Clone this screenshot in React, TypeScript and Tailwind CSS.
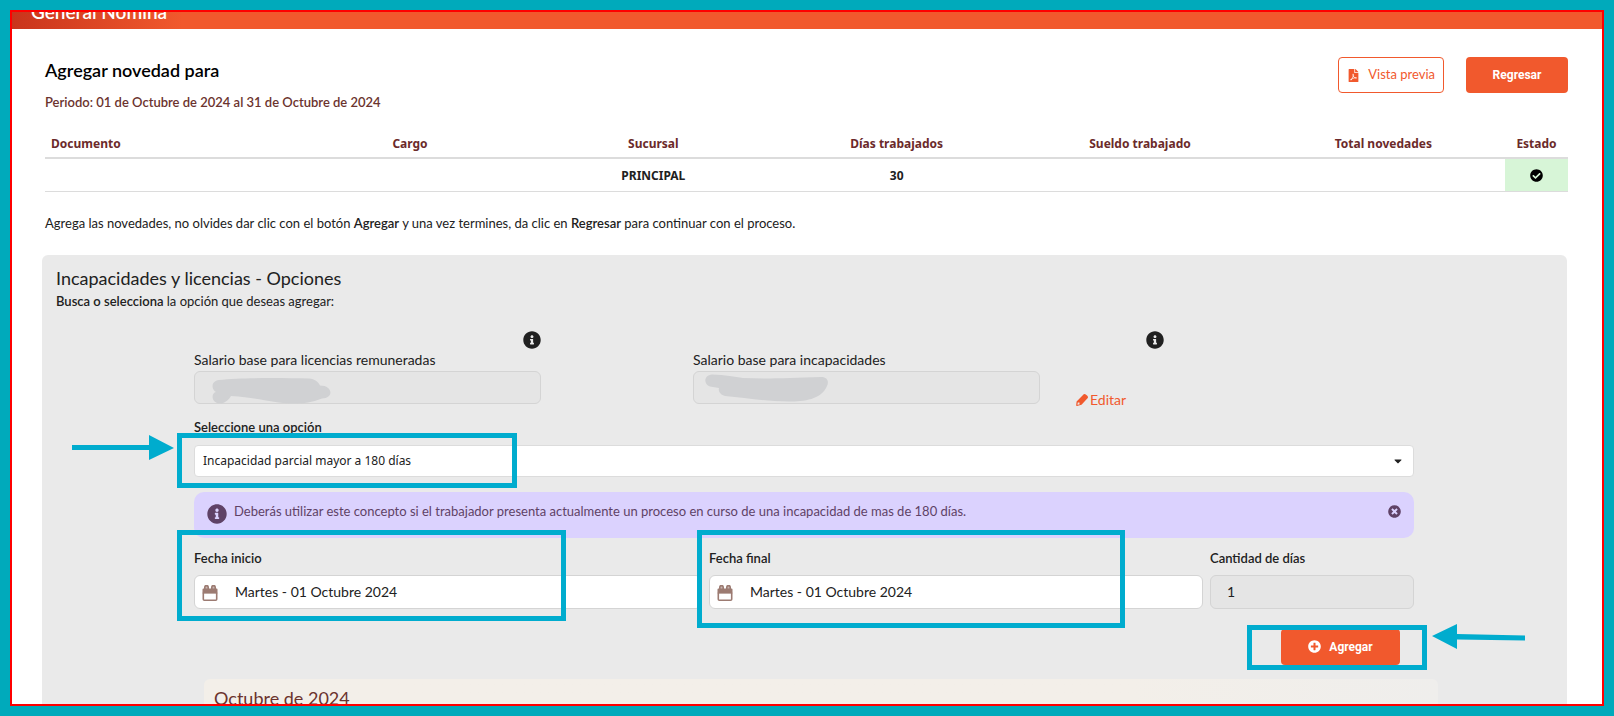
import { FaCaretDown, FaCheckCircle, FaFilePdf, FaInfoCircle, FaPlusCircle, FaTimesCircle } from 'react-icons/fa';
import { clsx } from 'clsx';

const columns = ['Documento', 'Cargo', 'Sucursal', 'Días trabajados', 'Sueldo trabajado', 'Total novedades'];
const row = ['', '', 'PRINCIPAL', '30', '', ''];

function PencilIcon() {
  return (
    <svg viewBox="0 0 12 12" className="size-3" fill="currentColor" aria-hidden="true">
      <path
        fillRule="evenodd"
        d="M7 1a2 2 0 0 1 2.800-.5l1.500 1.300a2 2 0 0 1 0 2.800L5.500 10.800 1 11.900a.7.7 0 0 1-.8-.8L.6 7.500ZM1.800 8.600l-.4 2.100 2.100-.3v-1.800Z"
      />
    </svg>
  );
}

function CalendarIcon() {
  return (
    <svg viewBox="0 0 16 16" className="size-4" aria-hidden="true">
      <path d="M2.800 4.500V2.300a1.500 1.500 0 0 1 3.400 0v2.200M9.800 4.500V2.300a1.500 1.500 0 0 1 3.400 0v2.200" fill="#c9b6b0" stroke="#9c7b72" strokeWidth="1.600" />
      <path d="M1.500 3.500h13a1 1 0 0 1 1 1v4H.5v-4a1 1 0 0 1 1-1Z" fill="#9c7b72" />
      <rect x="1.300" y="7.500" width="13.400" height="7.700" rx="1" fill="none" stroke="#9c7b72" strokeWidth="1.600" />
    </svg>
  );
}

function DateField({ id, label }: { id: string; label: string }) {
  return (
    <div>
      <label htmlFor={id} className="block text-[13px] leading-5 font-semibold">{label}</label>
      <div className="relative mt-[7px]">
        <span className="absolute left-[8px] top-[10px]"><CalendarIcon /></span>
        <input
          id={id}
          defaultValue="Martes - 01 Octubre 2024"
          className="h-[34px] w-full rounded-[6px] border border-[#d4d4d4] bg-white pl-10 pr-3 text-[14px]"
        />
      </div>
    </div>
  );
}

function Highlight({ className }: { className: string }) {
  return <div className={clsx('pointer-events-none absolute border-[5px] border-[#00acce]', className)} />;
}

export default function App() {
  return (
    <div className="flex h-screen flex-col bg-[#00aabb] p-[10px] font-['Lato',sans-serif] text-[#212121]">
      <div className="flex min-h-0 flex-1 flex-col overflow-hidden border-2 border-[#ff0000] bg-white">
        <header className="flex h-[17px] shrink-0 items-end overflow-hidden bg-linear-to-r from-[#c9341c] to-[#f1592d] to-[170px] px-[19px] pb-[5px]">
          <span className="text-[19px] leading-6 font-semibold text-white">General Nomina</span>
        </header>

        <main className="pl-[33px] pr-[34px]">
          <div className="flex justify-between pt-[28px]">
            <div>
              <h1 className="text-[18px] leading-[26px] font-semibold text-black">Agregar novedad para</h1>
              <p className="mt-[9px] text-[13px] leading-5 font-semibold text-[#6b332e]">
                Periodo: 01 de Octubre de 2024 al 31 de Octubre de 2024
              </p>
            </div>
            <div className="flex items-start gap-[22px]">
              <button className="flex h-9 items-center gap-2 rounded-[4px] border border-[#f1592d] px-2 text-[13px] text-[#f1592d]">
                <FaFilePdf className="size-[13px]" />
                Vista previa
              </button>
              <button className="h-9 w-[102px] rounded-[4px] bg-[#f1592d] font-['Roboto',sans-serif] text-[12px] font-bold text-white">
                Regresar
              </button>
            </div>
          </div>

          <table className="mt-[17px] w-full table-fixed font-['Noto_Sans',sans-serif] text-[12px] font-bold">
            <thead>
              <tr className="h-[29px] border-b-2 border-[#dcdcdc] text-[#6b2a2a]">
                {columns.map((name, i) => (
                  <th key={name} className={clsx('pt-[2px]', i === 0 ? 'pl-[6px] text-left' : 'text-center')}>{name}</th>
                ))}
                <th className="w-[63px] pt-[2px]">Estado</th>
              </tr>
            </thead>
            <tbody>
              <tr className="h-[33px] border-b border-[#dcdcdc]">
                {row.map((value, i) => (
                  <td key={i} className="pt-[2px] text-center">{value}</td>
                ))}
                <td className="bg-[#d7f5d7] pt-[2px]">
                  <FaCheckCircle className="mx-auto size-[13px] text-black" />
                </td>
              </tr>
            </tbody>
          </table>

          <p className="mt-[21px] text-[13px] leading-5">
            Agrega las novedades, no olvides dar clic con el botón <b className="font-semibold">Agregar</b> y una vez
            termines, da clic en <b className="font-semibold">Regresar</b> para continuar con el proceso.
          </p>
        </main>

        <section className="relative mt-[22px] ml-[30px] mr-[35px] min-h-[460px] shrink-0 rounded-[6px] bg-[#eaeaea] pt-[11px]">
          <div className="px-[14px]">
            <h2 className="text-[18px] leading-6">Incapacidades y licencias - Opciones</h2>
            <p className="mt-px text-[13px] leading-5">
              <b className="font-semibold">Busca o selecciona</b> la opción que deseas agregar:
            </p>
          </div>

          <form className="ml-[152px] mr-[153px] mt-5" onSubmit={(e) => e.preventDefault()}>
            <div className="grid grid-cols-[347fr_152fr_471fr_250fr]">
              <div>
                <FaInfoCircle className="ml-auto size-[18px]" />
                <label htmlFor="licencias" className="mt-px block text-[14px] leading-5">
                  Salario base para licencias remuneradas
                </label>
                <div className="relative mt-px">
                  <input id="licencias" disabled className="h-[33px] w-full rounded-[6px] border border-[#d4d4d4] bg-[#e5e5e5]" />
                  <svg viewBox="0 0 119 26" className="absolute left-[18px] top-[7px] h-[26px] w-[119px]" aria-hidden="true">
                    <path d="M7 2C30-.5 70 0 97 .5c6 .5 9 3 11 7 13 0 14 13 2 13-10 4-18 5-28 5C60 25 50 20 19 18c-3 5-8 8-12 7.500C-1 24-1 15 4 14-1 11-1 3 7 2Z" fill="#d0d1d3" />
                  </svg>
                </div>
              </div>
              <div className="col-start-3">
                <FaInfoCircle className="ml-auto size-[18px]" />
                <label htmlFor="incapacidades" className="mt-px block text-[14px] leading-5">
                  Salario base para incapacidades
                </label>
                <div className="mt-px flex h-[39px] gap-9">
                  <div className="relative w-[347px]">
                    <input id="incapacidades" disabled className="h-[33px] w-full rounded-[6px] border border-[#d4d4d4] bg-[#e5e5e5]" />
                    <svg viewBox="0 0 123 28" className="absolute left-[12px] top-[3px] h-[28px] w-[123px]" aria-hidden="true">
                      <path d="M7 .5C20 1 30 3 38 4c25 1 45 0 78-1 7 0 8 5 6 9-5 12-20 16-39 15.500C60 27 40 24 20 22c-4-1-7-4-6-8L5 12.500C-2 10-1 1 7 .5Z" fill="#d0d1d3" />
                    </svg>
                  </div>
                  <button className="flex items-center gap-[2px] self-end text-[14px] leading-5 text-[#f1592d]">
                    <PencilIcon />
                    Editar
                  </button>
                </div>
              </div>
            </div>

            <label htmlFor="opcion" className="mt-[7px] block text-[13px] leading-5 font-semibold">Seleccione una opción</label>
            <div className="relative mt-[8px]">
              <select id="opcion" className="h-8 w-full appearance-none rounded-[4px] border border-[#dcdcdc] bg-white px-2 font-['Noto_Sans',sans-serif] text-[12px]">
                <option>Incapacidad parcial mayor a 180 días</option>
              </select>
              <FaCaretDown className="pointer-events-none absolute right-[10px] top-[10px] size-3" />
            </div>

            <div role="status" className="mt-[15px] flex h-[46px] items-start rounded-[10px] bg-[#dbd2fe] px-[13px] pt-[9px] text-[13px] text-[#5f4266]">
              <FaInfoCircle className="mt-[3px] size-5" />
              <span className="ml-[7px] leading-5">
                Deberás utilizar este concepto si el trabajador presenta actualmente un proceso en curso de una incapacidad de mas de 180 días.
              </span>
              <button aria-label="Cerrar" className="ml-auto mt-[4px]">
                <FaTimesCircle className="size-[13px]" />
              </button>
            </div>

            <div className="mt-[10px] grid grid-cols-[508fr_494fr_204fr] gap-[7px]">
              <DateField id="inicio" label="Fecha inicio" />
              <DateField id="final" label="Fecha final" />
              <div>
                <label htmlFor="dias" className="block text-[13px] leading-5 font-semibold">Cantidad de días</label>
                <input
                  id="dias"
                  disabled
                  defaultValue="1"
                  className="mt-[7px] h-[34px] w-full rounded-[6px] border border-[#d4d4d4] bg-[#e5e5e5] px-4 text-[14px]"
                />
              </div>
            </div>

            <button className="ml-auto mr-[14px] mt-5 flex h-9 w-[119px] items-center justify-center gap-2 rounded-[4px] bg-[#f1592d] font-['Roboto',sans-serif] text-[12px] font-bold text-white">
              <FaPlusCircle className="size-[13px]" />
              Agregar
            </button>

            <div className="mt-[14px] -mr-6 ml-[10px] h-20 rounded-[6px] bg-linear-to-r from-[#f3efe9] from-75% to-[#efeeec] px-[10px] pt-[7px]">
              <h3 className="text-[18px] leading-6 text-[#6b332e]">Octubre de 2024</h3>
            </div>
          </form>

          <Highlight className="left-[135px] top-[178px] h-[55px] w-[340px]" />
          <Highlight className="left-[135px] top-[275px] h-[91px] w-[389px]" />
          <Highlight className="left-[655px] top-[275px] h-[98px] w-[428px]" />
          <Highlight className="left-[1205px] top-[370px] h-[45px] w-[180px]" />
          <svg viewBox="0 0 102 26" className="absolute left-[30px] top-[180px] h-[26px] w-[102px]" fill="#00acce" aria-hidden="true">
            <path d="M0 10h77V0l25 13-25 12V15H0Z" />
          </svg>
          <svg viewBox="0 0 93 26" className="absolute left-[1390px] top-[369px] h-[26px] w-[93px]" fill="#00acce" aria-hidden="true">
            <path d="M0 12 25 0v10l68 1.500v5L25 15.500V25Z" />
          </svg>
        </section>
      </div>
    </div>
  );
}
